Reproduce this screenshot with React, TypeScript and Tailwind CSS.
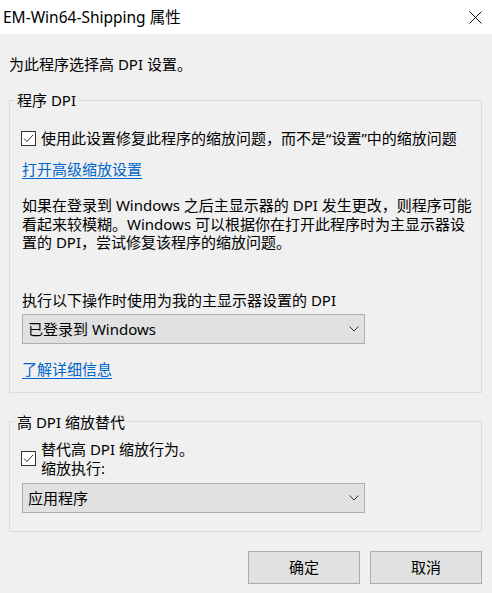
const font = { fontFamily: '"Noto Sans", "Noto Sans CJK SC", sans-serif' };

function CheckBox() {
  return (
    <div className="w-[15px] h-[15px] border border-[#333333] bg-white flex items-center justify-center shrink-0">
      <svg width="13" height="13" viewBox="0 0 13 13">
        <polyline points="2,6.5 5,9.5 11,3" fill="none" stroke="#333333" strokeWidth="1" />
      </svg>
    </div>
  );
}

function Chevron() {
  return (
    <svg width="10" height="6" viewBox="0 0 10 6">
      <polyline points="0.5,0.5 5,5 9.5,0.5" fill="none" stroke="#333333" strokeWidth="1" />
    </svg>
  );
}

function Select({ value }: { value: string }) {
  return (
    <div className="w-[343px] h-[30px] border border-[#adadad] bg-[#e1e1e1] flex items-center justify-between pl-[5px] pr-[5px]">
      <span className="text-[15px] leading-[18px]">{value}</span>
      <Chevron />
    </div>
  );
}

function Link({ children }: { children: React.ReactNode }) {
  return (
    <span className="text-[15px] leading-[18px] text-[#0066cc] underline underline-offset-[3px] decoration-1 self-start">
      {children}
    </span>
  );
}

function Button({ label }: { label: string }) {
  return (
    <div className="w-[112px] h-[33px] border border-[#adadad] bg-[#e1e1e1] flex items-center justify-center text-[15px]">
      {label}
    </div>
  );
}

export default function App() {
  return (
    <div className="w-[492px] h-[593px] bg-[#f0f0f0] text-black flex flex-col" style={font}>
      {/* title bar */}
      <div className="h-[34px] bg-white flex items-center justify-between pl-[3px] pr-[10px] shrink-0">
        <span className="text-[15.5px] leading-[20px]">EM-Win64-Shipping 属性</span>
        <svg width="13" height="13" viewBox="0 0 13 13">
          <path d="M0.5 0.5 L12.5 12.5 M12.5 0.5 L0.5 12.5" stroke="#111111" strokeWidth="1" />
        </svg>
      </div>

      <div className="flex flex-col pl-[9px] pr-[10px]">
        <p className="mt-[21px] text-[15px] leading-[18px]">为此程序选择高 DPI 设置。</p>

        {/* 程序 DPI */}
        <fieldset className="mt-[18px] border border-[#dcdcdc] flex flex-col pl-[12px] pb-[14px]">
          <legend className="-ml-[7px] px-[2px] text-[15px] leading-[18px]">程序 DPI</legend>
          <div className="mt-[20px] flex items-center gap-[5px] -ml-px">
            <CheckBox />
            <span className="text-[15px] leading-[18px] whitespace-nowrap">
              使用此设置修复此程序的缩放问题，而不是“设置”中的缩放问题
            </span>
          </div>
          <div className="mt-[13px] flex">
            <Link>打开高级缩放设置</Link>
          </div>
          <p className="mt-[18px] text-[15px] leading-[18.5px] whitespace-nowrap">
            如果在登录到 Windows 之后主显示器的 DPI 发生更改，则程序可能
            <br />
            看起来较模糊。Windows 可以根据你在打开此程序时为主显示器设
            <br />
            置的 DPI，尝试修复该程序的缩放问题。
          </p>
          <p className="mt-[39px] text-[15px] leading-[18px]">执行以下操作时使用为我的主显示器设置的 DPI</p>
          <div className="mt-[5px]">
            <Select value="已登录到 Windows" />
          </div>
          <div className="mt-[16px] flex">
            <Link>了解详细信息</Link>
          </div>
        </fieldset>

        {/* 高 DPI 缩放替代 */}
        <fieldset className="mt-[20px] border border-[#dcdcdc] flex flex-col pl-[12px] pb-[18px]">
          <legend className="-ml-[7px] px-[2px] text-[15px] leading-[18px]">高 DPI 缩放替代</legend>
          <div className="mt-[9px] flex items-center gap-[5px] -ml-px">
            <CheckBox />
            <span className="text-[15px] leading-[19px]">
              替代高 DPI 缩放行为。
              <br />
              缩放执行:
            </span>
          </div>
          <div className="mt-[5px]">
            <Select value="应用程序" />
          </div>
        </fieldset>

        <div className="mt-[19px] flex justify-end gap-[10px]">
          <Button label="确定" />
          <Button label="取消" />
        </div>
      </div>
    </div>
  );
}
